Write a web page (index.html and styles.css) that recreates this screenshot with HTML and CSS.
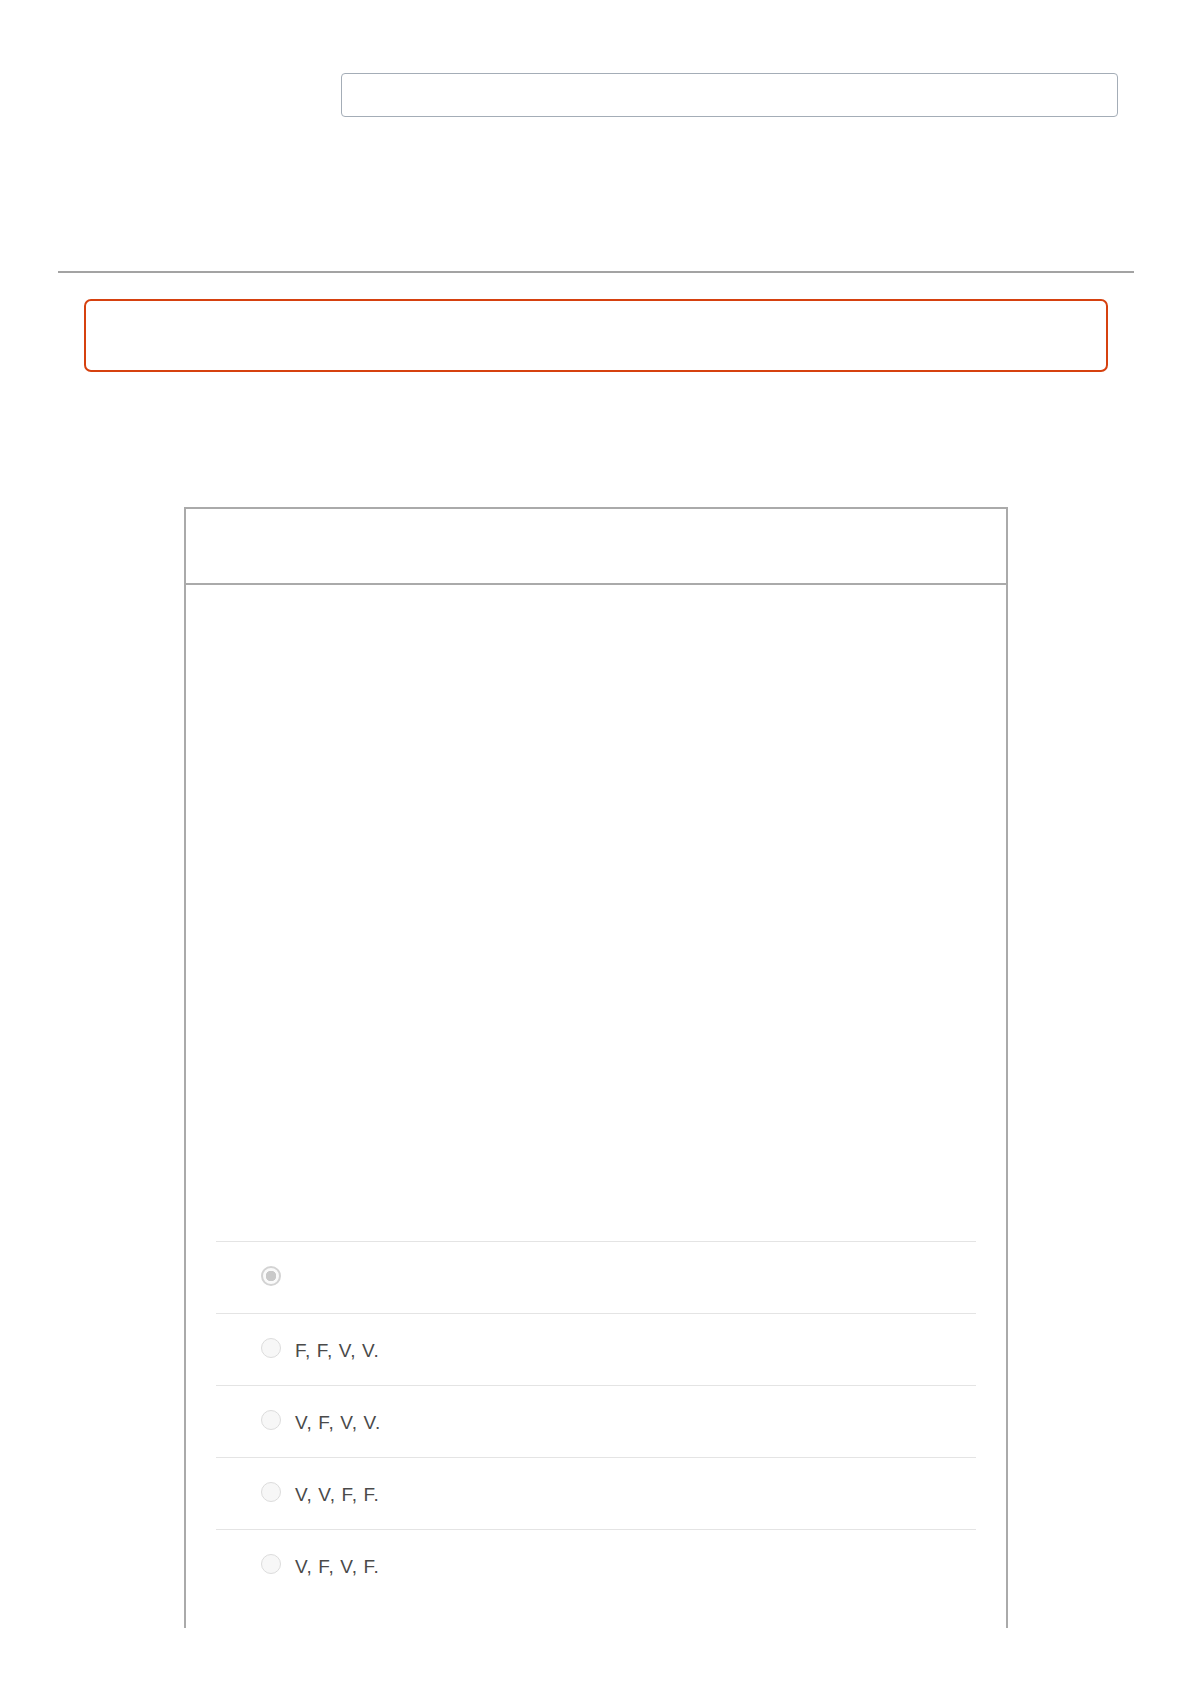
FILE: index.html
```html
<!DOCTYPE html>
<html lang="pt">
<head>
    <title>Questão</title>
    <meta charset="UTF-8" />
    <meta name="viewport" content="width=device-width" />
    <link rel="stylesheet" href="styles.css">
</head>
<body>
    <main class="page">
        <div class="field-row">
            <label class="field-label" for="answer-name"></label>
            <input type="text" id="answer-name" class="text-input" />
        </div>

        <hr class="divider" />

        <div class="alert-box"></div>

        <section class="question-card">
            <header class="card-header"></header>
            <div class="card-body">
                <div class="question-text"></div>
                <ul class="options">
                    <li class="option"><input type="radio" name="q1" class="radio" checked disabled /><span class="option-text"></span></li>
                    <li class="option"><input type="radio" name="q1" class="radio" disabled /><span class="option-text">F, F, V, V.</span></li>
                    <li class="option"><input type="radio" name="q1" class="radio" disabled /><span class="option-text">V, F, V, V.</span></li>
                    <li class="option"><input type="radio" name="q1" class="radio" disabled /><span class="option-text">V, V, F, F.</span></li>
                    <li class="option"><input type="radio" name="q1" class="radio" disabled /><span class="option-text">V, F, V, F.</span></li>
                </ul>
            </div>
        </section>
    </main>
</body>
</html>
```

FILE: styles.css
```css
body {
    margin: 0;
    font-family: "Liberation Sans", Arial, sans-serif;
    color: #4a4a4a;
    background: #fff;
}
.page {
    padding: 73px 56px 0 58px;
}
.field-row {
    display: grid;
    grid-template-columns: 283px 1fr;
    margin-right: 16px;
}
.text-input {
    box-sizing: border-box;
    height: 44px;
    border: 1px solid #a4adb7;
    border-radius: 4px;
    margin: 0;
    padding: 0 10px;
    font: inherit;
}
.divider {
    margin: 154px 0 0;
    border: 0;
    border-top: 2px solid #a3a3a3;
}
.alert-box {
    margin: 26px 26px 0;
    height: 69px;
    border: 2px solid #d6410f;
    border-radius: 7px;
}
.question-card {
    width: 824px;
    box-sizing: border-box;
    margin: 135px auto 0;
    border: 2px solid #aaa;
    border-bottom: 0;
}
.card-header {
    height: 74px;
    border-bottom: 2px solid #aaa;
}
.card-body {
    padding: 0 30px 27px;
}
.question-text {
    height: 656px;
}
.options {
    list-style: none;
    margin: 0;
    padding: 0;
}
.option {
    display: flex;
    align-items: center;
    gap: 14px;
    height: 71px;
    padding-left: 45px;
    border-top: 1px solid #e4e4e4;
    font-size: 19px;
    letter-spacing: 0.6px;
}
.option-text {
    padding-top: 2px;
}
.radio {
    appearance: none;
    box-sizing: border-box;
    width: 20px;
    height: 20px;
    margin: 0 0 3px;
    border: 1px solid #dcdcdc;
    border-radius: 50%;
    background: #f7f7f7;
}
.radio:checked {
    border: 2px solid #d3d3d3;
    background: radial-gradient(circle, #c9c9c9 0 5px, #fafafa 5.5px);
}
```
